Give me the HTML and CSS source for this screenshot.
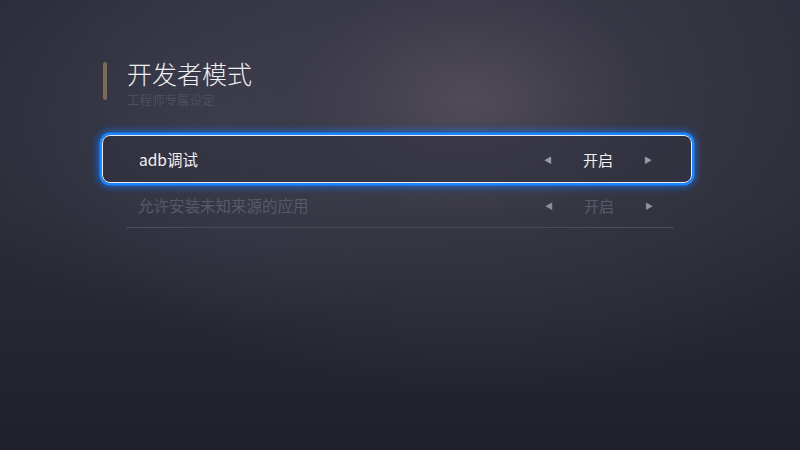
FILE: index.html
```html
<!DOCTYPE html>
<html lang="zh">
<head>
<meta charset="utf-8">
<link rel="stylesheet" href="styles.css">
</head>
<body>
<div class="screen">
  <header class="head">
    <div class="accent"></div>
    <div class="titles">
      <h1 class="title">开发者模式</h1>
      <div class="subtitle">工程师专属设定</div>
    </div>
  </header>
  <div class="list">
    <div class="row focused">
      <span class="label">adb调试</span>
      <div class="picker">
        <span class="arrow">&#9664;</span>
        <span class="value">开启</span>
        <span class="arrow">&#9654;</span>
      </div>
    </div>
    <div class="row dim">
      <span class="label">允许安装未知来源的应用</span>
      <div class="picker">
        <span class="arrow">&#9664;</span>
        <span class="value">开启</span>
        <span class="arrow">&#9654;</span>
      </div>
    </div>
    <div class="divider"></div>
  </div>
</div>
</body>
</html>
```
FILE: styles.css
```css
* { box-sizing: border-box; }
html, body { margin: 0; padding: 0; }
body {
  width: 800px;
  height: 450px;
  overflow: hidden;
  font-family: "Noto Sans CJK SC", "Noto Sans", sans-serif;
}
.screen {
  width: 800px;
  height: 450px;
  background:
    radial-gradient(ellipse 440px 300px at 470px 100px, rgba(82,76,90,0.95) 0%, rgba(64,62,76,0.6) 40%, rgba(40,42,54,0) 100%),
    radial-gradient(ellipse 300px 200px at 220px 130px, rgba(70,72,92,0.5) 0%, rgba(60,62,80,0) 100%),
    linear-gradient(180deg, #2c2d3a 0%, #2a2c37 45%, #1f212a 100%);
  padding: 62px 0 0 102px;
}
.head {
  display: flex;
  gap: 20px;
}
.accent {
  width: 4px;
  height: 38px;
  background: #7e6b52;
  border-radius: 2px;
  margin-left: 1px;
}
.titles { display: flex; flex-direction: column; }
.title {
  margin: -3px 0 0 0;
  font-size: 25px;
  font-weight: 300;
  color: #eceef2;
  line-height: 28px;
}
.subtitle {
  font-size: 12.5px;
  color: #4c4f5e;
  line-height: 14px;
  margin-top: 6px;
}
.list {
  margin-top: 28px;
  width: 590px;
  display: flex;
  flex-direction: column;
}
.row {
  height: 48px;
  display: flex;
  align-items: center;
  justify-content: space-between;
  padding: 0 38px 0 36px;
  font-size: 15.5px;
}
.row.focused {
  border: 1.5px solid #e8eaf0;
  border-radius: 8px;
  background: rgba(48,48,62,0.55);
  box-shadow: 0 0 0 2.5px #1c86ff, 0 0 8px 3px rgba(20,120,255,0.85);
  color: #f2f3f6;
}
.row.dim {
  color: #575a68;
  height: 44px;
}
.picker {
  display: flex;
  align-items: center;
}
.arrow {
  font-size: 8px;
  color: #9a9ca6;
  width: 10px;
  text-align: center;
}
.row.dim .arrow { color: #8e909a; }
.value {
  width: 90px;
  text-align: center;
  font-size: 15px;
}
.row.dim .value { color: #585b69; }
.divider {
  margin: 0 18px 0 24px;
  height: 1px;
  background: #4a4c58;
}
```
